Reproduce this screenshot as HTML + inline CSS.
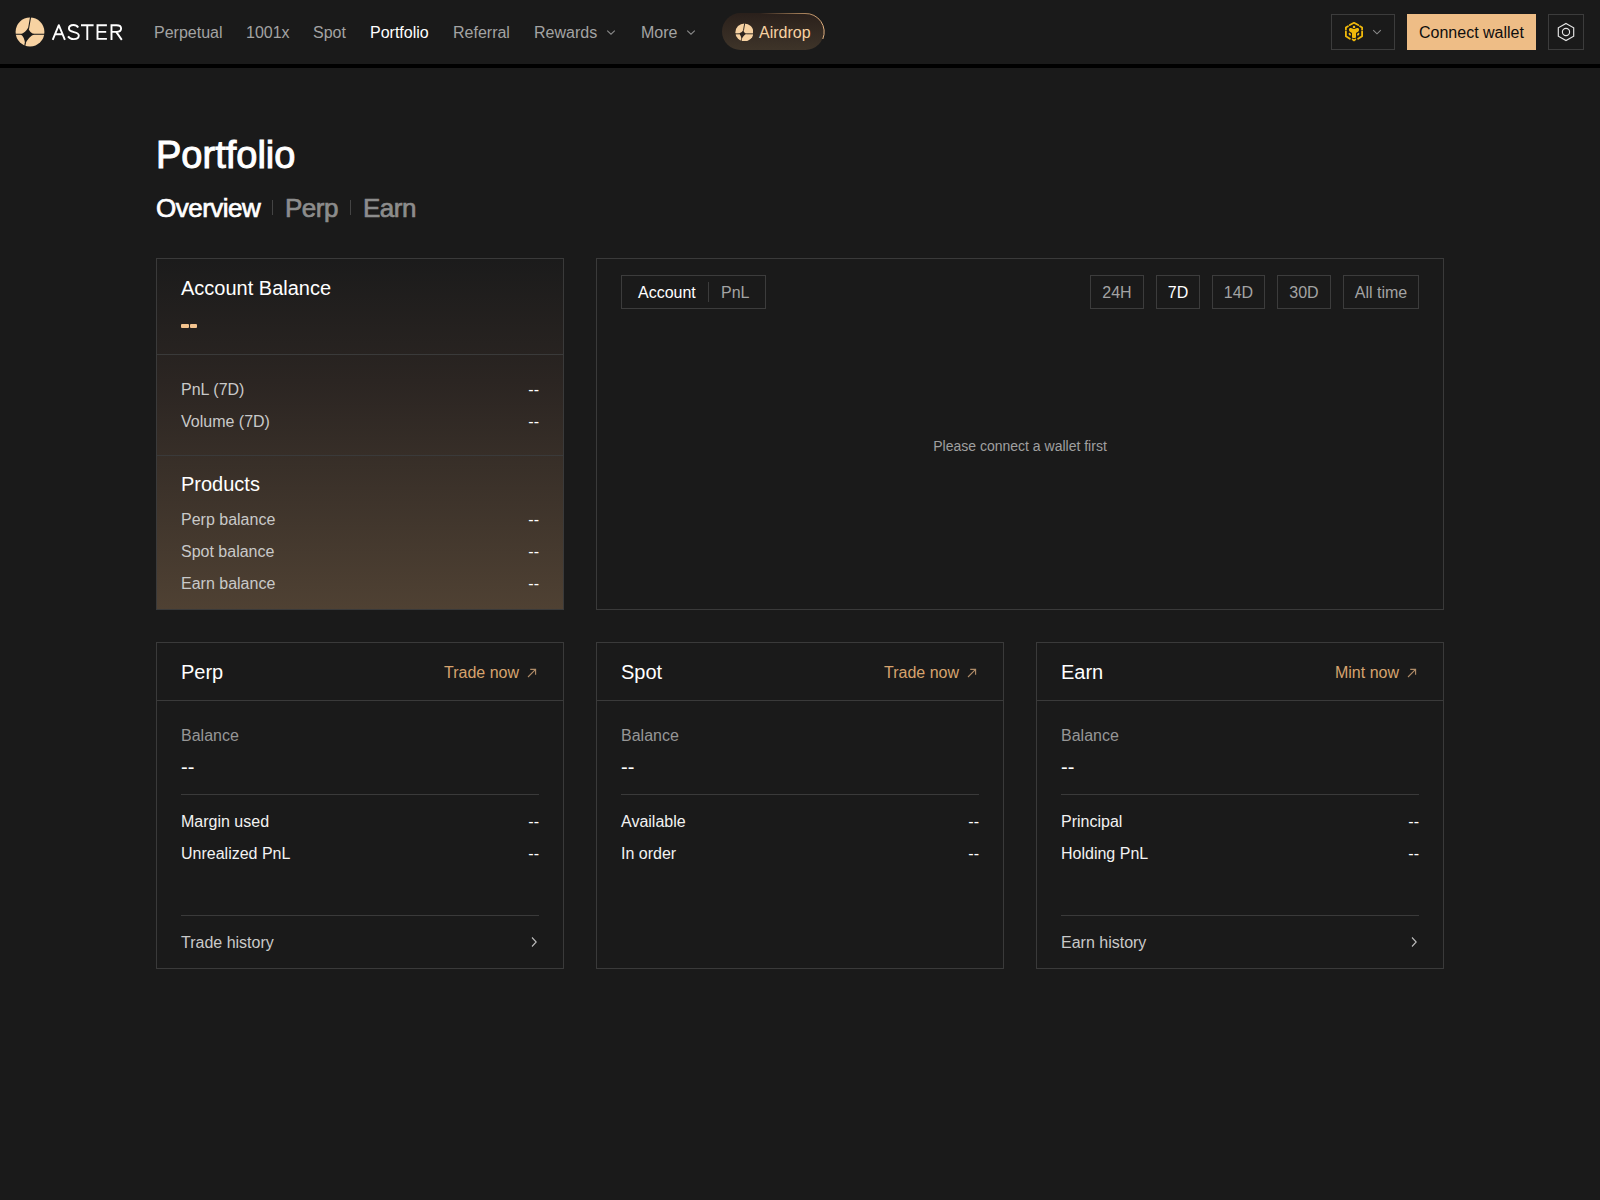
<!DOCTYPE html>
<html><head><meta charset="utf-8">
<style>
*{box-sizing:border-box;margin:0;padding:0}
html,body{width:1600px;height:1200px;overflow:hidden;background:#1a1a1a;font-family:"Liberation Sans",sans-serif;color:#fff}
.abs{position:absolute}
.t{position:absolute;white-space:nowrap;line-height:1}
.r{text-align:right}
#hline{position:absolute;left:0;top:64px;width:1600px;height:4px;background:#000}
.nav{font-size:16px;color:#a3a3a3;top:25px}
.box{position:absolute;border:1px solid #3c3c3c}
.card{position:absolute;border:1px solid #3a3a3a}
.s16{font-size:16px}
.s20{font-size:20px}
.hd{position:absolute;height:1px;background:#3a3a3a}
.g1{color:#c9c9c9}
.g2{color:#969696}
.pk{color:#d6a36e}
.dash{font-size:16px;color:#fff}
.tb{position:absolute;top:275px;height:34px;border:1px solid #3c3c3c;font-size:16px;color:#a3a3a3;text-align:center;line-height:34px}
</style></head>
<body>
<!-- ===== HEADER ===== -->
<svg class="abs" style="left:15px;top:17px" width="30" height="30" viewBox="15 17 30 30">
  <circle cx="30" cy="32" r="14.4" fill="#f7d2a2"/>
  <path d="M28.3 27.6 Q29.2 32.6 34.4 34.3 Q28.4 36.85 25.0 44.4 Q24.8 36.85 20.4 34.3 Q25.65 32.6 28.3 27.6Z" fill="#1a1a1a"/>
  <path d="M28.5 29 L30.6 17 M33 34.3 L45 34.3 M25.3 43 L24.6 47 M21.5 34.3 L15 34.3" stroke="#1a1a1a" stroke-width="1.1"/>
</svg>
<svg class="abs" style="left:50px;top:22px" width="76" height="20" viewBox="50 22 76 20" fill="none" stroke="#fff" stroke-width="1.9">
  <path d="M52.7 39.9 L58.8 25.2 L64.9 39.9 M55.1 34.3 L62.5 34.3" stroke-linejoin="round"/>
  <path d="M78.2 27.4 C77.1 25.7 75.5 25 73.5 25 C70.9 25 68.9 26.4 68.9 28.6 C68.9 33.4 78.8 30.9 78.8 35.5 C78.8 37.8 76.6 39.1 73.6 39.1 C71.2 39.1 69.2 38.1 68 36.4"/>
  <path d="M81 25.3 L93.6 25.3 M87.3 25.3 L87.3 39.9"/>
  <path d="M106.9 25.3 L97.5 25.3 L97.5 38.9 L106.9 38.9 M97.5 31.9 L106.2 31.9"/>
  <path d="M111.5 39.9 L111.5 25.3 L116.6 25.3 C119.5 25.3 121.1 26.8 121.1 28.6 C121.1 30.5 119.5 31.9 116.6 31.9 L111.5 31.9 M116.2 31.9 L121.8 39.9"/>
</svg>
<div class="t nav" style="left:154px">Perpetual</div>
<div class="t nav" style="left:246px">1001x</div>
<div class="t nav" style="left:313px">Spot</div>
<div class="t nav" style="left:370px;color:#fff">Portfolio</div>
<div class="t nav" style="left:453px">Referral</div>
<div class="t nav" style="left:534px">Rewards</div>
<div class="t nav" style="left:641px">More</div>
<svg class="abs" style="left:605px;top:26px" width="12" height="12" viewBox="0 0 12 12"><path d="M2.2 4.6 L6 8.2 L9.8 4.6" fill="none" stroke="#8a8a8a" stroke-width="1.1"/></svg>
<svg class="abs" style="left:685px;top:26px" width="12" height="12" viewBox="0 0 12 12"><path d="M2.2 4.6 L6 8.2 L9.8 4.6" fill="none" stroke="#8a8a8a" stroke-width="1.1"/></svg>
<div class="abs" style="left:722px;top:13px;width:102px;height:37px;border-radius:19px;background:linear-gradient(180deg,#2a201b,#3e3429)"></div>
<svg class="abs" style="left:715px;top:5px" width="120" height="55" viewBox="715 5 120 55" fill="none">
  <defs><linearGradient id="ag" x1="760" y1="0" x2="824" y2="0" gradientUnits="userSpaceOnUse"><stop offset="0" stop-color="#c89a6a" stop-opacity="0"/><stop offset="0.6" stop-color="#c89a6a" stop-opacity="0.7"/><stop offset="1" stop-color="#e0b080"/></linearGradient></defs>
  <path d="M760 13.5 L805 13.5 A18.5 18.5 0 0 1 822.8 39" stroke="url(#ag)" stroke-width="1"/>
</svg>
<svg class="abs" style="left:734.6px;top:22.5px" width="18.8" height="18.8" viewBox="15 17 30 30">
  <circle cx="30" cy="32" r="14.4" fill="#f7d2a2"/>
  <path d="M28.4 28.2 Q28.76 33.0 34 34.3 Q28.1 36.34 25.2 44 Q25.3 36.34 20.7 34.3 Q25.97 33.0 28.4 28.2Z" fill="#2e251f"/>
  <path d="M28.5 29 L30.6 17 M33 34.3 L45 34.3 M25.3 43 L24.6 47 M21.5 34.3 L15 34.3" stroke="#2e251f" stroke-width="1.5"/>
</svg>
<div class="t s16" style="left:759px;top:25px;color:#f7d2a2">Airdrop</div>
<div class="box" style="left:1331px;top:14px;width:64px;height:36px"></div>
<svg class="abs" style="left:1342px;top:20px" width="24" height="24" viewBox="0 0 24 24">
  <g fill="#f0b90b" stroke="#f0b90b" stroke-linecap="round" stroke-linejoin="round">
    <path d="M7.8 5 L12 2.8 L16.2 5" fill="none" stroke-width="1.8"/>
    <circle cx="12" cy="6.9" r="1.25" stroke="none"/>
    <path d="M6.9 9.8 C6.9 8.4 8 7.8 9 8.1 C10 8.4 10.9 9.1 12 9.1 C13.1 9.1 14 8.4 15 8.1 C16 7.8 17.1 8.4 17.1 9.8 C17.1 11.2 15.6 12.4 14 12.9 L14 16.9 C14 17.7 13 18.1 12 18.1 C11 18.1 10 17.7 10 16.9 L10 12.9 C8.4 12.4 6.9 11.2 6.9 9.8Z" stroke="none"/>
    <path d="M6 6.3 L3.9 7.6 L3.9 9.4 M18 6.3 L20.1 7.6 L20.1 9.4" fill="none" stroke-width="1.8"/>
    <path d="M3.9 11.4 L3.9 16.2 L7.9 18.7 M20.1 11.4 L20.1 16.2 L16.1 18.7" fill="none" stroke-width="1.8"/>
    <ellipse cx="7.8" cy="14.2" rx="1.0" ry="1.5" stroke="none" transform="rotate(-35 7.8 14.2)"/>
    <ellipse cx="16.2" cy="14.2" rx="1.0" ry="1.5" stroke="none" transform="rotate(35 16.2 14.2)"/>
    <path d="M10.6 19.4 L12 20.5 L13.4 19.4" fill="none" stroke-width="1.7"/>
  </g>
</svg>
<svg class="abs" style="left:1371px;top:26px" width="12" height="12" viewBox="0 0 12 12"><path d="M2.2 4.2 L6 7.8 L9.8 4.2" fill="none" stroke="#8a8a8a" stroke-width="1.1"/></svg>
<div class="abs" style="left:1407px;top:14px;width:129px;height:36px;background:#eebd86"></div>
<div class="t s16" style="left:1419px;top:25px;color:#0e0e0e">Connect wallet</div>
<div class="box" style="left:1548px;top:14px;width:36px;height:36px"></div>
<svg class="abs" style="left:1554px;top:20px" width="24" height="24" viewBox="0 0 24 24" fill="none" stroke="#e6e6e6" stroke-width="1.15">
  <path d="M12 3.4 L19.7 7.8 L19.7 16.2 L12 20.6 L4.3 16.2 L4.3 7.8Z"/>
  <circle cx="12" cy="12" r="3.6"/>
</svg>
<div id="hline"></div>
<div class="t" style="left:156px;top:136px;font-size:38px;-webkit-text-stroke:1px #fff">Portfolio</div>
<div class="t" style="left:156px;top:195px;font-size:26px;letter-spacing:-0.5px;-webkit-text-stroke:0.7px #fff">Overview</div>
<div class="abs" style="left:272px;top:200px;width:1px;height:15px;background:#444"></div>
<div class="t" style="left:285px;top:195px;font-size:26px;letter-spacing:-0.5px;color:#8c8c8c;-webkit-text-stroke:0.7px #8c8c8c">Perp</div>
<div class="abs" style="left:350px;top:200px;width:1px;height:15px;background:#444"></div>
<div class="t" style="left:363px;top:195px;font-size:26px;letter-spacing:-0.5px;color:#8c8c8c;-webkit-text-stroke:0.7px #8c8c8c">Earn</div>
<div class="card" style="left:156px;top:258px;width:408px;height:352px;background:linear-gradient(180deg,#1b1b1b 0%,#2b2522 35%,#4f4133 100%)"></div>
<div class="t s20" style="left:181px;top:277.5px">Account Balance</div>
<div class="abs" style="left:181.2px;top:323.9px;width:7.7px;height:4px;border-radius:1px;background:#f3c38e"></div>
<div class="abs" style="left:189.9px;top:323.9px;width:7.2px;height:4px;border-radius:1px;background:#f3c38e"></div>
<div class="hd" style="left:157px;top:354px;width:406px"></div>
<div class="t s16 g1" style="left:181px;top:382px">PnL (7D)</div>
<div class="t dash r" style="left:439px;width:100px;top:382px">--</div>
<div class="t s16 g1" style="left:181px;top:414px">Volume (7D)</div>
<div class="t dash r" style="left:439px;width:100px;top:414px">--</div>
<div class="hd" style="left:157px;top:455px;width:406px"></div>
<div class="t s20" style="left:181px;top:474px">Products</div>
<div class="t s16 g1" style="left:181px;top:512px">Perp balance</div>
<div class="t dash r" style="left:439px;width:100px;top:512px">--</div>
<div class="t s16 g1" style="left:181px;top:544px">Spot balance</div>
<div class="t dash r" style="left:439px;width:100px;top:544px">--</div>
<div class="t s16 g1" style="left:181px;top:576px">Earn balance</div>
<div class="t dash r" style="left:439px;width:100px;top:576px">--</div>
<div class="card" style="left:596px;top:258px;width:848px;height:352px"></div>
<div class="box" style="left:621px;top:275px;width:145px;height:34px"></div>
<div class="t s16" style="left:638px;top:285px">Account</div>
<div class="abs" style="left:708px;top:282px;width:1px;height:20px;background:#3c3c3c"></div>
<div class="t s16" style="left:721px;top:285px;color:#a3a3a3">PnL</div>
<div class="tb" style="left:1090px;width:54px">24H</div>
<div class="tb" style="left:1156px;width:44px;color:#fff">7D</div>
<div class="tb" style="left:1212px;width:53px">14D</div>
<div class="tb" style="left:1277px;width:54px">30D</div>
<div class="tb" style="left:1343px;width:76px">All time</div>
<div class="t" style="left:820px;width:400px;text-align:center;top:438.5px;font-size:14px;color:#a0a0a0">Please connect a wallet first</div>
<div class="card" style="left:156px;top:642px;width:408px;height:327px"></div>
<div class="t s20" style="left:181px;top:662px">Perp</div>
<div class="t s16 pk r" style="left:239px;width:280px;top:664.5px">Trade now</div>
<svg class="abs" style="left:526.5px;top:667.6px" width="10" height="10" viewBox="0 0 10 10"><path d="M1 9 L8.6 1.4 M3.2 1.4 L8.6 1.4 L8.6 6.8" fill="none" stroke="#b08c68" stroke-width="1.1"/></svg>
<div class="hd" style="left:157px;top:700px;width:406px"></div>
<div class="t s16 g2" style="left:181px;top:727.5px">Balance</div>
<div class="t" style="left:181px;top:757px;font-size:20px">--</div>
<div class="hd" style="left:181px;top:794px;width:358px"></div>
<div class="t s16" style="left:181px;top:814px;color:#f2f2f2">Margin used</div>
<div class="t dash r" style="left:439px;width:100px;top:814px">--</div>
<div class="t s16" style="left:181px;top:846px;color:#f2f2f2">Unrealized PnL</div>
<div class="t dash r" style="left:439px;width:100px;top:846px">--</div>
<div class="hd" style="left:181px;top:915px;width:358px"></div>
<div class="t s16 g1" style="left:181px;top:935px">Trade history</div>
<svg class="abs" style="left:530px;top:936px" width="8" height="12" viewBox="0 0 8 12"><path d="M2 1.5 L6.2 6 L2 10.5" fill="none" stroke="#bdbdbd" stroke-width="1.1"/></svg>
<div class="card" style="left:596px;top:642px;width:408px;height:327px"></div>
<div class="t s20" style="left:621px;top:662px">Spot</div>
<div class="t s16 pk r" style="left:679px;width:280px;top:664.5px">Trade now</div>
<svg class="abs" style="left:966.5px;top:667.6px" width="10" height="10" viewBox="0 0 10 10"><path d="M1 9 L8.6 1.4 M3.2 1.4 L8.6 1.4 L8.6 6.8" fill="none" stroke="#b08c68" stroke-width="1.1"/></svg>
<div class="hd" style="left:597px;top:700px;width:406px"></div>
<div class="t s16 g2" style="left:621px;top:727.5px">Balance</div>
<div class="t" style="left:621px;top:757px;font-size:20px">--</div>
<div class="hd" style="left:621px;top:794px;width:358px"></div>
<div class="t s16" style="left:621px;top:814px;color:#f2f2f2">Available</div>
<div class="t dash r" style="left:879px;width:100px;top:814px">--</div>
<div class="t s16" style="left:621px;top:846px;color:#f2f2f2">In order</div>
<div class="t dash r" style="left:879px;width:100px;top:846px">--</div>
<div class="card" style="left:1036px;top:642px;width:408px;height:327px"></div>
<div class="t s20" style="left:1061px;top:662px">Earn</div>
<div class="t s16 pk r" style="left:1119px;width:280px;top:664.5px">Mint now</div>
<svg class="abs" style="left:1406.5px;top:667.6px" width="10" height="10" viewBox="0 0 10 10"><path d="M1 9 L8.6 1.4 M3.2 1.4 L8.6 1.4 L8.6 6.8" fill="none" stroke="#b08c68" stroke-width="1.1"/></svg>
<div class="hd" style="left:1037px;top:700px;width:406px"></div>
<div class="t s16 g2" style="left:1061px;top:727.5px">Balance</div>
<div class="t" style="left:1061px;top:757px;font-size:20px">--</div>
<div class="hd" style="left:1061px;top:794px;width:358px"></div>
<div class="t s16" style="left:1061px;top:814px;color:#f2f2f2">Principal</div>
<div class="t dash r" style="left:1319px;width:100px;top:814px">--</div>
<div class="t s16" style="left:1061px;top:846px;color:#f2f2f2">Holding PnL</div>
<div class="t dash r" style="left:1319px;width:100px;top:846px">--</div>
<div class="hd" style="left:1061px;top:915px;width:358px"></div>
<div class="t s16 g1" style="left:1061px;top:935px">Earn history</div>
<svg class="abs" style="left:1410px;top:936px" width="8" height="12" viewBox="0 0 8 12"><path d="M2 1.5 L6.2 6 L2 10.5" fill="none" stroke="#bdbdbd" stroke-width="1.1"/></svg>
</body></html>
